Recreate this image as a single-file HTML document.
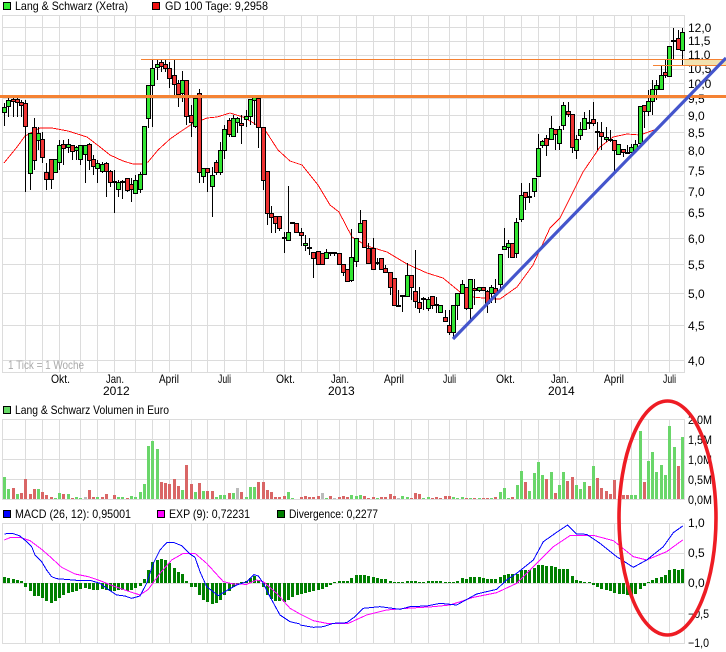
<!DOCTYPE html>
<html><head><meta charset="utf-8"><style>
html,body{margin:0;padding:0;background:#fff;width:726px;height:652px;overflow:hidden}
svg{display:block;font-family:"Liberation Sans",Arial,sans-serif;font-size:12px;fill:#000}
text{fill:#000}
.l{font-size:12px}
.r{font-size:12px}
</style></head><body>
<svg width="726" height="652" viewBox="0 0 726 652" xmlns="http://www.w3.org/2000/svg">
<rect width="726" height="652" fill="#fff"/>
<g fill="none" stroke="#dcdcdc" shape-rendering="crispEdges">
<path d="M2.5 15V373M25.5 15V373M42.5 15V373M59.5 15V373M80.5 15V373M97.5 15V373M114.5 15V373M135.5 15V373M152.5 15V373M169.5 15V373M191.5 15V373M207.5 15V373M224.5 15V373M246.5 15V373M263.5 15V373M284.5 15V373M301.5 15V373M317.5 15V373M339.5 15V373M356.5 15V373M373.5 15V373M394.5 15V373M411.5 15V373M428.5 15V373M449.5 15V373M466.5 15V373M483.5 15V373M504.5 15V373M521.5 15V373M538.5 15V373M559.5 15V373M576.5 15V373M593.5 15V373M614.5 15V373M631.5 15V373M648.5 15V373M669.5 15V373M684.5 15V373"/>
<path d="M2 15.5H685M2 27.5H685M2 41.5H685M2 55.5H685M2 69.5H685M2 83.5H685M2 98.5H685M2 115.5H685M2 132.5H685M2 150.5H685M2 171.5H685M2 191.5H685M2 212.5H685M2 238.5H685M2 264.5H685M2 293.5H685M2 325.5H685M2 360.5H685M2 372.5H685"/>
<path d="M2.5 419V500M25.5 419V500M42.5 419V500M59.5 419V500M80.5 419V500M97.5 419V500M114.5 419V500M135.5 419V500M152.5 419V500M169.5 419V500M191.5 419V500M207.5 419V500M224.5 419V500M246.5 419V500M263.5 419V500M284.5 419V500M301.5 419V500M317.5 419V500M339.5 419V500M356.5 419V500M373.5 419V500M394.5 419V500M411.5 419V500M428.5 419V500M449.5 419V500M466.5 419V500M483.5 419V500M504.5 419V500M521.5 419V500M538.5 419V500M559.5 419V500M576.5 419V500M593.5 419V500M614.5 419V500M631.5 419V500M648.5 419V500M669.5 419V500M684.5 419V500"/>
<path d="M2 419.5H685M2 439.5H685M2 459.5H685M2 479.5H685M2 499.5H685"/>
<path d="M2.5 523V644M25.5 523V644M42.5 523V644M59.5 523V644M80.5 523V644M97.5 523V644M114.5 523V644M135.5 523V644M152.5 523V644M169.5 523V644M191.5 523V644M207.5 523V644M224.5 523V644M246.5 523V644M263.5 523V644M284.5 523V644M301.5 523V644M317.5 523V644M339.5 523V644M356.5 523V644M373.5 523V644M394.5 523V644M411.5 523V644M428.5 523V644M449.5 523V644M466.5 523V644M483.5 523V644M504.5 523V644M521.5 523V644M538.5 523V644M559.5 523V644M576.5 523V644M593.5 523V644M614.5 523V644M631.5 523V644M648.5 523V644M669.5 523V644M684.5 523V644"/>
<path d="M2 523.5H685M2 553.5H685M2 583.5H685M2 613.5H685M2 643.5H685"/>
</g>

<!-- legends -->
<rect x="3.5" y="2.5" width="7" height="7" fill="#33ee33" stroke="#000"/>
<text class="l" x="15" y="10" textLength="113" lengthAdjust="spacingAndGlyphs">Lang &amp; Schwarz (Xetra)</text>
<rect x="152.5" y="2.5" width="7" height="7" fill="#ee1111" stroke="#000"/>
<text class="l" x="165" y="10" textLength="103" lengthAdjust="spacingAndGlyphs">GD 100 Tage: 9,2958</text>
<rect x="3.5" y="406.5" width="7" height="7" fill="#66d966" stroke="#000"/>
<text class="l" x="15" y="414" textLength="154" lengthAdjust="spacingAndGlyphs">Lang &amp; Schwarz Volumen in Euro</text>
<rect x="3.5" y="510.5" width="7" height="7" fill="#0000ff" stroke="#000"/>
<text class="l" x="15" y="518" textLength="116" lengthAdjust="spacingAndGlyphs">MACD (26, 12): 0,95001</text>
<rect x="157.5" y="510.5" width="7" height="7" fill="#ff00ff" stroke="#000"/>
<text class="l" x="169" y="518" textLength="81" lengthAdjust="spacingAndGlyphs">EXP (9): 0,72231</text>
<rect x="277.5" y="510.5" width="7" height="7" fill="#007f00" stroke="#000"/>
<text class="l" x="289" y="518" textLength="89" lengthAdjust="spacingAndGlyphs">Divergence: 0,2277</text>

<text class="l" x="8" y="369" style="fill:#aaa" textLength="76" lengthAdjust="spacingAndGlyphs">1 Tick = 1 Woche</text>

<!-- x labels -->
<g class="l">
<text x="51" y="383" textLength="19" lengthAdjust="spacingAndGlyphs">Okt.</text>
<text x="106" y="383" textLength="18" lengthAdjust="spacingAndGlyphs">Jan.</text><text x="103" y="395">2012</text>
<text x="159" y="383" textLength="20" lengthAdjust="spacingAndGlyphs">April</text>
<text x="218" y="383" textLength="13" lengthAdjust="spacingAndGlyphs">Juli</text>
<text x="276" y="383" textLength="19" lengthAdjust="spacingAndGlyphs">Okt.</text>
<text x="331" y="383" textLength="18" lengthAdjust="spacingAndGlyphs">Jan.</text><text x="328" y="395">2013</text>
<text x="384" y="383" textLength="20" lengthAdjust="spacingAndGlyphs">April</text>
<text x="443" y="383" textLength="13" lengthAdjust="spacingAndGlyphs">Juli</text>
<text x="496" y="383" textLength="19" lengthAdjust="spacingAndGlyphs">Okt.</text>
<text x="551" y="383" textLength="18" lengthAdjust="spacingAndGlyphs">Jan.</text><text x="548" y="395">2014</text>
<text x="604" y="383" textLength="20" lengthAdjust="spacingAndGlyphs">April</text>
<text x="663" y="383" textLength="13" lengthAdjust="spacingAndGlyphs">Juli</text>
</g>

<!-- right axis labels -->
<g class="r">
<text x="688" y="32">12,0</text><text x="688" y="45">11,5</text><text x="688" y="59">11,0</text><text x="688" y="73">10,5</text><text x="688" y="88">10,0</text><text x="688" y="103">9,5</text><text x="688" y="120">9,0</text><text x="688" y="137">8,5</text><text x="688" y="155">8,0</text><text x="688" y="175">7,5</text><text x="688" y="196">7,0</text><text x="688" y="217">6,5</text><text x="688" y="243">6,0</text><text x="688" y="269">5,5</text><text x="688" y="298">5,0</text><text x="688" y="330">4,5</text><text x="688" y="365">4,0</text>
<text x="688" y="424" textLength="24" lengthAdjust="spacingAndGlyphs">2,0M</text><text x="688" y="444" textLength="24" lengthAdjust="spacingAndGlyphs">1,5M</text><text x="688" y="464" textLength="24" lengthAdjust="spacingAndGlyphs">1,0M</text><text x="688" y="484" textLength="24" lengthAdjust="spacingAndGlyphs">0,5M</text><text x="688" y="504" textLength="24" lengthAdjust="spacingAndGlyphs">0,0M</text>
<text x="688" y="527">1,0</text><text x="688" y="557">0,5</text><text x="688" y="587">0,0</text><text x="688" y="618" textLength="21" lengthAdjust="spacingAndGlyphs">−0,5</text><text x="688" y="647" textLength="21" lengthAdjust="spacingAndGlyphs">−1,0</text>
</g>

<!-- MA100 -->
<polyline fill="none" stroke="#ff0000" stroke-width=".9" points="4,163 17,147 25,136 40,128 52,128 68,131 87,137 100,147 110,155 123,161 133,164 142,164 148,162 158,150 170,139 180,132 192,124 207,118 217,117 230,113 243,117 257,125 265,130 278,150 290,161 302,165 318,185 330,205 339,212 352,237 367,246 387,252 407,264 427,273 443,278 460,292 473,297 493,299 500,299 517,287 533,265 550,228 560,218 583,172 600,147 613,137 627,134 640,135 657,129" shape-rendering="crispEdges"/>

<!-- candle wicks -->
<path fill="none" stroke="#000" shape-rendering="crispEdges" d="M4.5 103V126M8.5 98V117M13.5 98V117M17.5 98V117M21.5 100V117M25.5 100V192M30.5 133V190M34.5 118V170M38.5 127V150M42.5 132V163M46.5 163V190M51.5 159V189M55.5 159V172M59.5 140V170M63.5 140V165M68.5 139V153M72.5 145V160M76.5 146V160M80.5 145V165M85.5 145V183M89.5 143V170M93.5 155V175M97.5 160V183M102.5 162V173M106.5 162V197M110.5 170V187M114.5 170V213M118.5 180V197M122.5 180V199M127.5 178V192M131.5 178V202M135.5 175V194M140.5 172V193M144.5 126V174M148.5 85V128M152.5 60V127M157.5 60V80M161.5 60V72M165.5 60V72M169.5 62V88M174.5 60V95M178.5 80V107M182.5 71V102M186.5 80V125M191.5 105V137M195.5 95V128M199.5 89V183M203.5 168V183M207.5 168V192M212.5 167V217M216.5 160V175M220.5 142V175M224.5 125V159M229.5 118V137M233.5 115V137M237.5 117V133M241.5 115V144M246.5 110V127M250.5 99V125M254.5 95V125M258.5 97V148M263.5 127V190M267.5 171V225M271.5 206V233M275.5 216V233M279.5 216V231M284.5 232V253M288.5 186V240M301.5 228V246M305.5 235V251M309.5 238V255M313.5 252V278M326.5 249V258M330.5 252V256M334.5 252V256M343.5 264V276M351.5 229V282M356.5 238V267M360.5 210V232M368.5 243V263M373.5 238V270M377.5 258V265M381.5 258V270M385.5 265V272M390.5 272V295M394.5 278V306M398.5 290V307M402.5 296V312M407.5 263V296M411.5 275V300M415.5 250V308M419.5 287V313M423.5 297V310M428.5 297V311M432.5 296V309M436.5 297V313M445.5 310V322M449.5 310V335M453.5 305V338M457.5 293V320M462.5 280V293M466.5 287V310M470.5 279V320M474.5 279V305M479.5 287V292M487.5 290V313M491.5 285V303M495.5 279V303M500.5 254V292M504.5 228V250M508.5 240V258M512.5 243V258M516.5 218V258M521.5 183V222M525.5 192V210M529.5 183V203M534.5 178V197M538.5 134V176M542.5 140V148M546.5 135V156M551.5 116V139M555.5 129V150M559.5 126V150M563.5 102V130M568.5 102V117M572.5 114V153M576.5 135V159M580.5 122V140M584.5 112V130M589.5 110V129M593.5 102V126M597.5 122V150M601.5 122V150M606.5 127V142M610.5 130V142M614.5 140V172M618.5 144V155M623.5 149V157M627.5 145V154M631.5 144V153M635.5 140V151M640.5 106V144M644.5 105V128M648.5 90V116M652.5 80V115M656.5 80V100M661.5 65V90M665.5 60V78M673.5 28V60M678.5 30V50M682.5 28V65"/>
<!-- flat candles -->
<path fill="none" stroke="#000" stroke-width="2" shape-rendering="crispEdges" d="M112 182h5M120 182h5M282 238h5M290 223h5M307 248h5M328 253h5M332 253h5M375 263h5M396 306h5M400 296h5M421 299h5M434 305h5M527 197h5M587 123h5M595 132h5M608 140h5M625 153h5M671 41h5"/>
<!-- green bodies -->
<path fill="#33e633" stroke="#000" shape-rendering="crispEdges" d="M2.5 107.5h4v5h-4zM6.5 100.5h4v6h-4zM28.5 133.5h4v40h-4zM36.5 133.5h4v7h-4zM53.5 159.5h4v13h-4zM57.5 145.5h4v17h-4zM66.5 144.5h4v3h-4zM74.5 147.5h4v3h-4zM78.5 145.5h4v14h-4zM83.5 145.5h4v9h-4zM95.5 163.5h4v5h-4zM100.5 164.5h4v7h-4zM116.5 182.5h4v7h-4zM133.5 180.5h4v13h-4zM138.5 174.5h4v15h-4zM142.5 126.5h4v48h-4zM146.5 85.5h4v33h-4zM150.5 68.5h4v17h-4zM155.5 64.5h4v3h-4zM180.5 80.5h4v13h-4zM193.5 98.5h4v28h-4zM201.5 168.5h4v8h-4zM210.5 175.5h4v11h-4zM218.5 150.5h4v22h-4zM222.5 129.5h4v21h-4zM231.5 118.5h4v18h-4zM235.5 118.5h4v4h-4zM244.5 116.5h4v3h-4zM248.5 99.5h4v17h-4zM252.5 96.5h4v4h-4zM286.5 232.5h4v8h-4zM303.5 243.5h4v2h-4zM324.5 252.5h4v6h-4zM349.5 257.5h4v23h-4zM354.5 238.5h4v23h-4zM358.5 223.5h4v9h-4zM405.5 275.5h4v21h-4zM426.5 299.5h4v9h-4zM438.5 305.5h4v7h-4zM451.5 305.5h4v27h-4zM455.5 293.5h4v12h-4zM460.5 284.5h4v9h-4zM468.5 279.5h4v29h-4zM477.5 287.5h4v3h-4zM489.5 287.5h4v6h-4zM498.5 254.5h4v30h-4zM502.5 246.5h4v3h-4zM506.5 243.5h4v4h-4zM514.5 222.5h4v31h-4zM519.5 195.5h4v24h-4zM532.5 178.5h4v13h-4zM536.5 148.5h4v28h-4zM540.5 141.5h4v4h-4zM549.5 128.5h4v11h-4zM557.5 129.5h4v14h-4zM561.5 105.5h4v20h-4zM574.5 139.5h4v11h-4zM578.5 129.5h4v6h-4zM582.5 118.5h4v11h-4zM604.5 137.5h4v2h-4zM616.5 144.5h4v10h-4zM629.5 147.5h4v5h-4zM633.5 144.5h4v6h-4zM638.5 106.5h4v37h-4zM646.5 101.5h4v10h-4zM650.5 89.5h4v12h-4zM654.5 85.5h4v4h-4zM659.5 75.5h4v14h-4zM667.5 46.5h4v30h-4zM680.5 32.5h4v18h-4z"/>
<!-- red bodies -->
<path fill="#ee3333" stroke="#000" shape-rendering="crispEdges" d="M11.5 99.5h4v2h-4zM15.5 99.5h4v3h-4zM19.5 102.5h4v3h-4zM23.5 103.5h4v23h-4zM32.5 127.5h4v33h-4zM40.5 139.5h4v18h-4zM44.5 172.5h4v7h-4zM49.5 159.5h4v20h-4zM61.5 144.5h4v4h-4zM70.5 145.5h4v6h-4zM87.5 144.5h4v16h-4zM91.5 159.5h4v7h-4zM104.5 163.5h4v8h-4zM108.5 171.5h4v11h-4zM125.5 178.5h4v12h-4zM129.5 184.5h4v5h-4zM159.5 62.5h4v4h-4zM163.5 64.5h4v4h-4zM167.5 68.5h4v10h-4zM172.5 75.5h4v9h-4zM176.5 83.5h4v11h-4zM184.5 80.5h4v36h-4zM189.5 115.5h4v7h-4zM197.5 93.5h4v79h-4zM205.5 168.5h4v4h-4zM214.5 162.5h4v10h-4zM227.5 120.5h4v14h-4zM239.5 123.5h4v2h-4zM256.5 98.5h4v29h-4zM261.5 127.5h4v53h-4zM265.5 171.5h4v42h-4zM269.5 213.5h4v4h-4zM273.5 216.5h4v7h-4zM277.5 216.5h4v12h-4zM294.5 223.5h4v9h-4zM299.5 232.5h4v3h-4zM311.5 252.5h4v6h-4zM316.5 251.5h4v13h-4zM320.5 253.5h4v11h-4zM337.5 253.5h4v11h-4zM341.5 264.5h4v8h-4zM345.5 269.5h4v12h-4zM362.5 220.5h4v27h-4zM366.5 248.5h4v15h-4zM371.5 248.5h4v21h-4zM379.5 258.5h4v11h-4zM383.5 268.5h4v4h-4zM388.5 272.5h4v15h-4zM392.5 278.5h4v27h-4zM409.5 275.5h4v12h-4zM413.5 291.5h4v10h-4zM417.5 302.5h4v6h-4zM430.5 296.5h4v9h-4zM443.5 317.5h4v4h-4zM447.5 325.5h4v7h-4zM464.5 287.5h4v21h-4zM472.5 288.5h4v2h-4zM481.5 287.5h4v3h-4zM485.5 291.5h4v12h-4zM493.5 288.5h4v5h-4zM510.5 243.5h4v14h-4zM523.5 192.5h4v5h-4zM544.5 138.5h4v7h-4zM553.5 129.5h4v5h-4zM566.5 111.5h4v3h-4zM570.5 114.5h4v33h-4zM591.5 119.5h4v4h-4zM599.5 132.5h4v4h-4zM612.5 140.5h4v10h-4zM621.5 149.5h4v3h-4zM642.5 105.5h4v6h-4zM663.5 72.5h4v3h-4zM676.5 38.5h4v11h-4z"/>

<!-- volume -->
<path fill="#6ad66a" shape-rendering="crispEdges" d="M3 499v-22h3v22zM7 499v-10h3v10zM16 499v-5h3v5zM37 499v-10h3v10zM54 499v-1h3v1zM58 499v-6h3v6zM67 499v-5h3v5zM75 499v-2h3v2zM79 499v-1h3v1zM96 499v-2h3v2zM117 499v-2h3v2zM121 499v-2h3v2zM130 499v-3h3v3zM134 499v-2h3v2zM139 499v-7h3v7zM143 499v-15h3v15zM147 499v-53h3v53zM151 499v-58h3v58zM156 499v-50h3v50zM181 499v-9h3v9zM194 499v-7h3v7zM202 499v-8h3v8zM215 499v-2h3v2zM219 499v-4h3v4zM223 499v-4h3v4zM232 499v-6h3v6zM245 499v-2h3v2zM249 499v-12h3v12zM253 499v-12h3v12zM287 499v-7h3v7zM291 499v-1h3v1zM325 499v-1h3v1zM350 499v-4h3v4zM355 499v-3h3v3zM359 499v-4h3v4zM376 499v-1h3v1zM401 499v-3h3v3zM406 499v-2h3v2zM422 499v-1h3v1zM427 499v-2h3v2zM452 499v-2h3v2zM456 499v-1h3v1zM461 499v-2h3v2zM469 499v-1h3v1zM478 499v-1h3v1zM490 499v-1h3v1zM499 499v-7h3v7zM503 499v-11h3v11zM507 499v-1h3v1zM516 499v-14h3v14zM520 499v-28h3v28zM528 499v-8h3v8zM533 499v-26h3v26zM537 499v-37h3v37zM541 499v-24h3v24zM550 499v-27h3v27zM558 499v-14h3v14zM562 499v-27h3v27zM575 499v-14h3v14zM579 499v-10h3v10zM583 499v-17h3v17zM592 499v-33h3v33zM630 499v-4h3v4zM634 499v-4h3v4zM639 499v-68h3v68zM647 499v-38h3v38zM651 499v-47h3v47zM655 499v-27h3v27zM660 499v-34h3v34zM664 499v-24h3v24zM668 499v-73h3v73zM673 499v-52h3v52zM681 499v-62h3v62z"/>
<path fill="#d96666" shape-rendering="crispEdges" d="M12 499v-11h3v11zM20 499v-6h3v6zM24 499v-20h3v20zM29 499v-5h3v5zM33 499v-10h3v10zM41 499v-7h3v7zM45 499v-4h3v4zM50 499v-2h3v2zM62 499v-5h3v5zM71 499v-1h3v1zM88 499v-9h3v9zM92 499v-2h3v2zM101 499v-2h3v2zM105 499v-5h3v5zM113 499v-4h3v4zM126 499v-1h3v1zM160 499v-17h3v17zM164 499v-16h3v16zM168 499v-15h3v15zM173 499v-20h3v20zM177 499v-13h3v13zM185 499v-34h3v34zM190 499v-15h3v15zM198 499v-16h3v16zM206 499v-8h3v8zM211 499v-8h3v8zM228 499v-6h3v6zM240 499v-7h3v7zM257 499v-17h3v17zM262 499v-17h3v17zM266 499v-9h3v9zM270 499v-7h3v7zM274 499v-2h3v2zM278 499v-2h3v2zM283 499v-3h3v3zM300 499v-2h3v2zM304 499v-3h3v3zM308 499v-2h3v2zM312 499v-2h3v2zM317 499v-3h3v3zM329 499v-3h3v3zM338 499v-2h3v2zM342 499v-3h3v3zM346 499v-2h3v2zM363 499v-3h3v3zM367 499v-1h3v1zM372 499v-2h3v2zM380 499v-2h3v2zM384 499v-2h3v2zM389 499v-5h3v5zM393 499v-3h3v3zM410 499v-1h3v1zM414 499v-6h3v6zM418 499v-5h3v5zM431 499v-1h3v1zM435 499v-2h3v2zM439 499v-1h3v1zM444 499v-3h3v3zM448 499v-3h3v3zM465 499v-1h3v1zM473 499v-1h3v1zM482 499v-1h3v1zM486 499v-1h3v1zM494 499v-2h3v2zM511 499v-2h3v2zM524 499v-17h3v17zM545 499v-20h3v20zM554 499v-6h3v6zM566 499v-18h3v18zM571 499v-22h3v22zM588 499v-13h3v13zM596 499v-21h3v21zM600 499v-11h3v11zM605 499v-8h3v8zM609 499v-5h3v5zM613 499v-19h3v19zM618 499v-3h3v3zM622 499v-4h3v4zM626 499v-4h3v4zM643 499v-17h3v17zM677 499v-33h3v33z"/>
<path fill="#bbbbbb" shape-rendering="crispEdges" d="M84 499v-2h3v2zM236 499v-11h3v11zM321 499v-6h3v6zM333 499v-1h3v1zM397 499v-1h3v1z"/>

<!-- divergence -->
<path fill="#007f00" shape-rendering="crispEdges" d="M3 583v-6h3v6zM7 583v-5h3v5zM12 583v-4h3v4zM16 583v-3h3v3zM20 583v-2h3v2zM24 583v4h3v-4zM29 583v8h3v-8zM33 583v13h3v-13zM37 583v13h3v-13zM41 583v15h3v-15zM45 583v18h3v-18zM50 583v20h3v-20zM54 583v18h3v-18zM58 583v15h3v-15zM62 583v12h3v-12zM67 583v10h3v-10zM71 583v9h3v-9zM75 583v8h3v-8zM79 583v6h3v-6zM84 583v5h3v-5zM88 583v6h3v-6zM92 583v7h3v-7zM96 583v7h3v-7zM101 583v6h3v-6zM105 583v7h3v-7zM109 583v8h3v-8zM113 583v8h3v-8zM117 583v7h3v-7zM121 583v7h3v-7zM126 583v8h3v-8zM130 583v7h3v-7zM134 583v5h3v-5zM139 583v3h3v-3zM143 583v-4h3v4zM147 583v-13h3v13zM151 583v-21h3v21zM156 583v-23h3v23zM160 583v-24h3v24zM164 583v-23h3v23zM168 583v-20h3v20zM173 583v-15h3v15zM177 583v-11h3v11zM181 583v-9h3v9zM185 583v-2h3v2zM190 583v4h3v-4zM194 583v4h3v-4zM198 583v12h3v-12zM202 583v17h3v-17zM206 583v19h3v-19zM211 583v21h3v-21zM215 583v20h3v-20zM219 583v17h3v-17zM223 583v12h3v-12zM228 583v8h3v-8zM232 583v4h3v-4zM236 583v2h3v-2zM240 583v-1h3v1zM245 583v-2h3v2zM249 583v-5h3v5zM253 583v-7h3v7zM257 583v-3h3v3zM262 583v4h3v-4zM266 583v12h3v-12zM270 583v16h3v-16zM274 583v18h3v-18zM278 583v18h3v-18zM283 583v19h3v-19zM287 583v17h3v-17zM291 583v14h3v-14zM296 583v12h3v-12zM300 583v11h3v-11zM304 583v10h3v-10zM308 583v9h3v-9zM312 583v8h3v-8zM317 583v7h3v-7zM321 583v6h3v-6zM325 583v4h3v-4zM329 583v2h3v-2zM333 583v-1h3v1zM338 583v-2h3v2zM342 583v-2h3v2zM346 583v-2h3v2zM350 583v-5h3v5zM355 583v-8h3v8zM359 583v-8h3v8zM363 583v-8h3v8zM367 583v-7h3v7zM372 583v-6h3v6zM376 583v-5h3v5zM380 583v-4h3v4zM384 583v-4h3v4zM389 583v-2h3v2zM393 583v-1h3v1zM397 583v-1h3v1zM401 583v-1h3v1zM406 583v-2h3v2zM410 583v-2h3v2zM414 583v-2h3v2zM418 583v-1h3v1zM422 583v-1h3v1zM427 583v-2h3v2zM431 583v-2h3v2zM435 583v-2h3v2zM439 583v-2h3v2zM444 583v-1h3v1zM448 583v-1h3v1zM452 583v-1h3v1zM456 583v-2h3v2zM461 583v-5h3v5zM465 583v-4h3v4zM469 583v-6h3v6zM473 583v-6h3v6zM478 583v-6h3v6zM482 583v-5h3v5zM486 583v-4h3v4zM490 583v-4h3v4zM494 583v-4h3v4zM499 583v-6h3v6zM503 583v-8h3v8zM507 583v-9h3v9zM511 583v-9h3v9zM516 583v-9h3v9zM520 583v-13h3v13zM524 583v-13h3v13zM528 583v-13h3v13zM533 583v-15h3v15zM537 583v-18h3v18zM541 583v-18h3v18zM545 583v-17h3v17zM550 583v-17h3v17zM554 583v-16h3v16zM558 583v-14h3v14zM562 583v-14h3v14zM566 583v-14h3v14zM571 583v-7h3v7zM575 583v-3h3v3zM579 583v-2h3v2zM583 583v-1h3v1zM588 583v-1h3v1zM592 583v2h3v-2zM596 583v4h3v-4zM600 583v6h3v-6zM605 583v7h3v-7zM609 583v8h3v-8zM613 583v10h3v-10zM618 583v11h3v-11zM622 583v11h3v-11zM626 583v12h3v-12zM630 583v12h3v-12zM634 583v11h3v-11zM639 583v6h3v-6zM643 583v3h3v-3zM647 583v-1h3v1zM651 583v-3h3v3zM655 583v-5h3v5zM660 583v-6h3v6zM664 583v-8h3v8zM668 583v-13h3v13zM673 583v-14h3v14zM677 583v-13h3v13zM681 583v-14h3v14z"/>

<!-- MACD lines -->
<g transform="translate(0,350) scale(.33333)" fill="none" shape-rendering="crispEdges">
<polyline stroke="#ff00ff" stroke-width="3" points="13,570 30,563 60,562 90,572 125,598 150,620 185,652 225,672 265,680 300,692 340,708 380,722 420,735 445,718 480,670 515,630 550,610 585,610 620,640 670,695 700,702 740,703 770,690 790,695 830,730 870,775 900,792"/>
<polyline stroke="#0000ff" stroke-width="3" points="13,552 25,550 40,551 60,558 80,575 95,590 105,615 125,635 140,660 155,680 170,686 195,688 230,691 270,691 300,700 330,722 350,735 375,738 395,745 420,738 440,700 460,640 480,600 500,578 520,577 545,587 570,612 585,622 600,665 620,710 655,737 680,722 710,705 740,695 762,674 775,678 790,700 810,740 840,795 870,815 900,822"/>
</g>
<g transform="translate(300,350) scale(.33333)" fill="none" shape-rendering="crispEdges">
<polyline stroke="#ff00ff" stroke-width="3" points="0,792 40,812 80,820 145,820 200,795 260,780 320,775 400,770 450,765 520,742 590,728 650,700 700,650 760,590 810,557 880,556 940,572 1000,620 1040,630 1100,605 1148,570"/>
<polyline stroke="#0000ff" stroke-width="3" points="0,825 40,832 70,830 100,820 140,818 165,800 190,775 240,770 300,778 330,770 380,768 420,760 470,765 530,732 590,718 620,690 650,670 700,630 730,575 770,547 803,525 830,552 860,553 900,580 950,620 1000,652 1040,630 1090,590 1120,548 1148,528"/>
</g>

<!-- drawn overlays -->
<rect x="684" y="60" width="42" height="5" fill="#f2e2b0"/>
<path d="M141 59.5H726M653 65.5H726" stroke="#f58233" fill="none" shape-rendering="crispEdges"/>
<path d="M0 96.5H726" stroke="#f58233" stroke-width="3" fill="none" shape-rendering="crispEdges"/>
<path d="M453 339L726 58" stroke="#4455cc" stroke-width="3.2" fill="none"/>
<ellipse cx="667.5" cy="518" rx="48.5" ry="117" fill="none" stroke="#ee1c24" stroke-width="3.6"/>
</svg>
</body></html>
